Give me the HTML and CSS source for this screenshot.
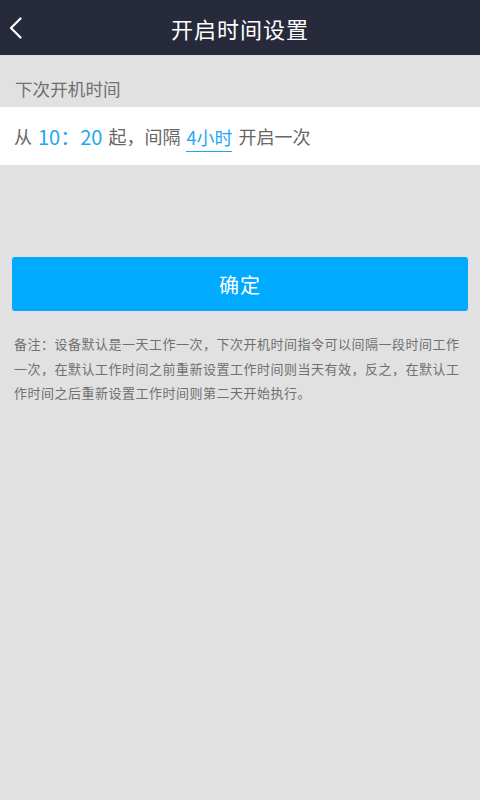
FILE: index.html
```html
<!DOCTYPE html>
<html lang="zh-CN">
  <head>
    <meta charset="UTF-8" />
    <meta name="viewport" content="width=device-width, initial-scale=1" />
    <title>开启时间设置</title>
    <link rel="stylesheet" href="styles.css">
  </head>
  <body>
    <!-- Header -->
    <header class="top-bar">
      <button class="back-btn" aria-label="返回">
        <svg width="14" height="22" viewBox="0 0 14 22">
          <path d="M11.5 1.5 L2 11 L11.5 20.5" fill="none" stroke="#fff" stroke-width="2.2" stroke-linecap="round" stroke-linejoin="round" />
        </svg>
      </button>
      <h1 class="title">开启时间设置</h1>
    </header>

    <!-- Next boot time -->
    <div class="section-label">下次开机时间</div>
    <div class="time-row">
      <span>从</span>
      <span class="blue time">10：20</span>
      <span>起，间隔</span>
      <span class="blue interval">4小时</span>
      <span>开启一次</span>
    </div>

    <button class="confirm-btn">确定</button>

    <p class="note">备注：设备默认是一天工作一次，下次开机时间指令可以间隔一段时间工作一次，在默认工作时间之前重新设置工作时间则当天有效，反之，在默认工作时间之后重新设置工作时间则第二天开始执行。</p>
  </body>
</html>
```

FILE: styles.css
```css
body {
  margin: 0;
  font-family: "Noto Sans CJK SC", "Noto Sans", sans-serif;
  background: #e1e1e1;
  color: #666;
  width: 480px;
  min-height: 800px;
}

.top-bar {
  height: 55px;
  background: #272a3b;
  display: flex;
  align-items: center;
  justify-content: center;
  position: relative;
}

.back-btn {
  position: absolute;
  left: 6px;
  top: 16px;
  background: transparent;
  border: none;
  padding: 0;
  width: 20px;
  height: 24px;
  display: flex;
  align-items: center;
  justify-content: center;
}

.title {
  margin: 0;
  color: #fff;
  font-size: 22px;
  font-weight: normal;
  letter-spacing: 1px;
}

.section-label {
  height: 52px;
  box-sizing: border-box;
  padding: 0 0 6px 15px;
  display: flex;
  align-items: flex-end;
  font-size: 17.6px;
  color: #707070;
}

.time-row {
  height: 58px;
  background: #fff;
  display: flex;
  align-items: center;
  padding-left: 14px;
  font-size: 18px;
  color: #666;
  gap: 6px;
}

.blue {
  color: #1ea6f4;
}

.time {
  font-size: 20px;
}

.interval {
  border-bottom: 1px solid #1ea6f4;
  padding-bottom: 1px;
  margin-top: 4px;
}

.confirm-btn {
  display: block;
  margin: 92px 12px 0;
  width: 456px;
  height: 54px;
  background: #00aaff;
  border: none;
  border-radius: 3px;
  color: #fff;
  font-family: inherit;
  font-size: 20px;
  letter-spacing: 1px;
}

.note {
  margin: 21px 0 0;
  padding: 0 16px 0 14px;
  font-size: 13px;
  line-height: 24.5px;
  letter-spacing: 0.5px;
  color: #707070;
}
```
